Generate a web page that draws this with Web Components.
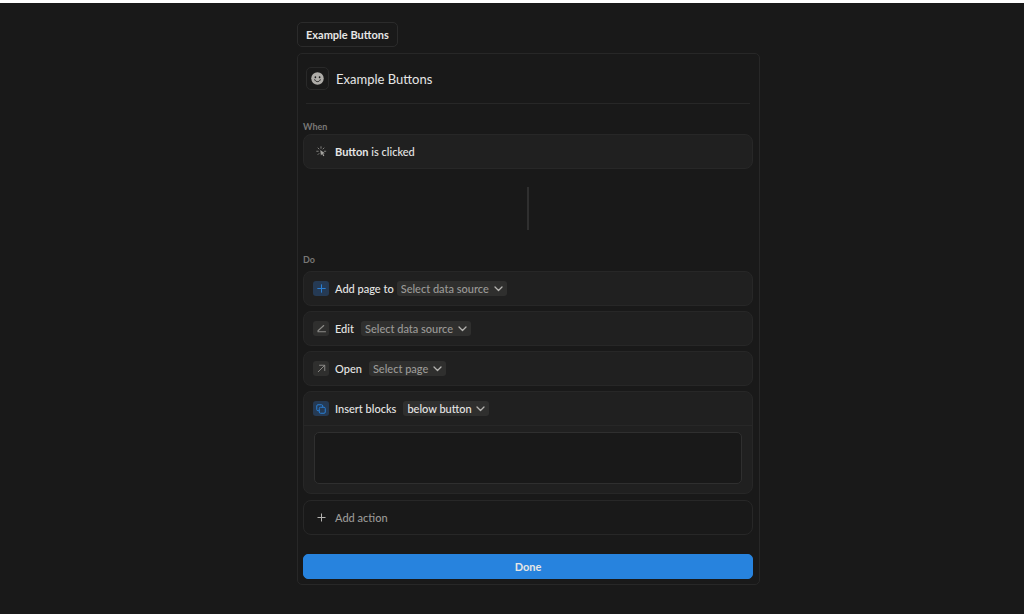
<!DOCTYPE html>
<html lang="en">
<head>
<meta charset="utf-8">
<title>Example Buttons</title>
<style>
  body {
    margin: 0;
    min-height: 100vh;
    box-sizing: border-box;
    border-top: 3px solid #fff;
    background: #191919;
    color: #e6e6e5;
    font: 500 11px/16px Lato, "Liberation Sans", sans-serif;
  }
</style>
</head>
<body>
<button-editor></button-editor>

<script>
const define = (name, html, setup) => {
  const template = document.createElement('template');
  template.innerHTML = html;
  customElements.define(name, class extends HTMLElement {
    constructor() {
      super();
      this.attachShadow({ mode: 'open' }).append(template.content.cloneNode(true));
    }
    connectedCallback() {
      if (setup) setup(this, this.shadowRoot);
    }
  });
};

const ICONS = {
  smile: `<svg width="13" height="13" viewBox="0 0 26 26"><circle cx="13" cy="13" r="12.5" fill="#aeaca8"/><ellipse cx="8.800" cy="10.500" rx="1.700" ry="2" fill="#191919"/><ellipse cx="17.200" cy="10.500" rx="1.700" ry="2" fill="#191919"/><path d="M7.500 15.500c1 2.600 3 3.700 5.500 3.700s4.500-1.100 5.500-3.700" fill="none" stroke="#191919" stroke-width="2" stroke-linecap="round"/></svg>`,
  click: `<svg width="11" height="11" viewBox="0 0 22 22" fill="none" stroke="#a3a29e" stroke-width="1.500" stroke-linecap="round"><path d="M10 1.500v3M4 4l2 2M1.500 10.500h3M4 17l2-2M16 4l-2 2M19.500 10.500h-3"/><path d="M8.500 8l1.300 11 2.400-2.900 2.600 4.600 1.900-1.100-2.500-4.400 3.700-.7z" fill="#a3a29e" stroke="none"/></svg>`,
  plus: `<svg width="9" height="9" viewBox="0 0 18 18" fill="none" stroke="currentColor" stroke-width="2" stroke-linecap="round"><path d="M9 1.500v15M1.500 9h15"/></svg>`,
  edit: `<svg width="9" height="9" viewBox="0 0 18 18" fill="none" stroke="currentColor" stroke-width="2.200" stroke-linecap="round" stroke-linejoin="round"><path d="M13.500 3L2 13.500V15.500H17"/></svg>`,
  open: `<svg width="9" height="9" viewBox="0 0 18 18" fill="none" stroke="currentColor" stroke-width="1.900" stroke-linecap="round" stroke-linejoin="round"><path d="M2.500 15.500l13-13M5 2.500h10.500V13"/></svg>`,
  blocks: `<svg width="10" height="10" viewBox="0 0 20 20" fill="none" stroke="currentColor" stroke-width="2" stroke-linejoin="round"><rect x="6.500" y="6.500" width="12" height="12" rx="2.500"/><path d="M6.500 13.500H4A2.500 2.500 0 0 1 1.500 11V4A2.500 2.500 0 0 1 4 1.500h7A2.500 2.500 0 0 1 13.500 4v2.500"/></svg>`,
  bigplus: `<svg width="9" height="9" viewBox="0 0 9 9" fill="none" stroke="#b4b3b0"><path d="M4.500 .5v8M.5 4.500h8"/></svg>`
};

define('ui-icon', `
  <style>
    :host { display: flex; align-items: center; justify-content: center; flex: none;
            width: 16px; height: 15px; border-radius: 3px; color: #8d8c89; }
    :host([tone="gray"]) { background: #2f2f2e; }
    :host([tone="blue"]) { background: #253a54; color: #2a7fd3; }
    span, svg { display: block; }
  </style>
  <span aria-hidden="true"></span>`,
  (host, root) => { root.querySelector('span').innerHTML = ICONS[host.getAttribute('name')]; });

define('section-label', `
  <style>
    :host { display: block; color: #787775; font-size: 9px; line-height: 15px; font-weight: 700; }
  </style>
  <slot></slot>`);

define('action-card', `
  <style>
    :host { display: block; border: 1px solid #272727; border-radius: 8px; background: #202020; }
    .row { display: flex; align-items: center; height: 33px; padding: 0 9px; }
    .row ::slotted(ui-icon) { margin-right: 6px; }
    ::slotted([slot="body"]) { border-top: 1px solid #272727; }
  </style>
  <div class="row"><slot></slot></div>
  <slot name="body"></slot>`);

define('choice-chip', `
  <style>
    :host { display: inline-grid; align-items: center; margin-left: 7px; color: #9b9a97; }
    :host([tight]) { margin-left: 3px; }
    :host([chosen]) { color: #e6e6e5; }
    select, svg { grid-area: 1 / 1; }
    select { appearance: none; height: 15px; margin: 0; padding: 0 17px 0 4px; border: 0;
             border-radius: 3px; background: #2f2f2e; color: inherit; font: inherit; }
    svg { justify-self: end; margin-right: 4px; pointer-events: none; }
  </style>
  <select><option></option></select>
  <svg width="9" height="6" viewBox="0 0 9 6" fill="none" stroke="#b5b4b1" stroke-width="1.300" stroke-linecap="round" stroke-linejoin="round" aria-hidden="true"><path d="M1 1l3.500 3.500L8 1"/></svg>`,
  (host, root) => {
    root.querySelector('option').textContent = host.getAttribute('value');
    root.querySelector('select').setAttribute('aria-label', host.getAttribute('label'));
  });

define('block-area', `
  <style>
    :host { display: block; padding: 6px 10px 9px; }
    textarea { display: block; box-sizing: border-box; width: 100%; height: 52px; margin: 0; padding: 6px;
               resize: none; border: 1px solid #2f2f2f; border-radius: 5px; background: #191919;
               color: inherit; font: inherit; }
  </style>
  <textarea aria-label="Blocks to insert"></textarea>`);

define('add-action', `
  <style>
    :host { display: block; }
    button { display: flex; align-items: center; gap: 6px; box-sizing: border-box; width: 100%; height: 35px;
             margin: 0; padding: 0 9px; border: 1px solid #272727; border-radius: 8px;
             background: none; color: #9b9a97; font: inherit; }
  </style>
  <button type="button"><ui-icon name="bigplus"></ui-icon><slot></slot></button>`);

define('push-button', `
  <style>
    :host { display: block; }
    button { box-sizing: border-box; height: 25px; margin: 0; padding: 0 8px; border: 1px solid #2b2b2b;
             border-radius: 5px; background: none; color: #e6e6e5; font: inherit; font-weight: 700; }
    :host([primary]) button { display: block; width: 100%; border-color: #2783de; background: #2783de; }
  </style>
  <button type="button"><slot></slot></button>`);

define('panel-title', `
  <style>
    :host { display: flex; align-items: center; gap: 7px; margin: 0 3px; padding: 13px 0;
            border-bottom: 1px solid #272727; }
    button { display: flex; align-items: center; justify-content: center; width: 23px; height: 23px;
             margin: 0; padding: 0; border: 1px solid #292929; border-radius: 5px; background: none; }
    h1 { margin: 0; font-size: 13px; line-height: 20px; font-weight: 400; }
  </style>
  <button type="button" aria-label="Change icon"><ui-icon name="smile"></ui-icon></button>
  <h1><slot></slot></h1>`);

define('button-editor', `
  <style>
    :host { display: block; max-width: 463px; margin: 0 auto; padding: 19px 0 24px 33px; }
    .panel { margin-top: 6px; padding: 0 6px 5px 5px; border: 1px solid #272727; border-radius: 5px; }
    .when { margin-top: 15px; }
    .link { width: 2px; height: 43px; margin: 18px auto 22px; background: #2f2f2f; }
    .actions { display: grid; gap: 5px; margin: 4px 0 19px; }
    add-action { margin-top: 1px; }
  </style>
  <push-button>Example Buttons</push-button>
  <div class="panel">
    <panel-title>Example Buttons</panel-title>
    <section-label class="when">When</section-label>
    <action-card><ui-icon name="click"></ui-icon><span><b>Button</b> is clicked</span></action-card>
    <div class="link"></div>
    <section-label>Do</section-label>
    <div class="actions">
      <action-card><ui-icon name="plus" tone="blue"></ui-icon>Add page to<choice-chip tight value="Select data source" label="Add page to"></choice-chip></action-card>
      <action-card><ui-icon name="edit" tone="gray"></ui-icon>Edit<choice-chip value="Select data source" label="Edit"></choice-chip></action-card>
      <action-card><ui-icon name="open" tone="gray"></ui-icon>Open<choice-chip value="Select page" label="Open"></choice-chip></action-card>
      <action-card><ui-icon name="blocks" tone="blue"></ui-icon>Insert blocks<choice-chip chosen value="below button" label="Insert blocks"></choice-chip><block-area slot="body"></block-area></action-card>
      <add-action>Add action</add-action>
    </div>
    <push-button primary>Done</push-button>
  </div>`);
</script>
</body>
</html>
